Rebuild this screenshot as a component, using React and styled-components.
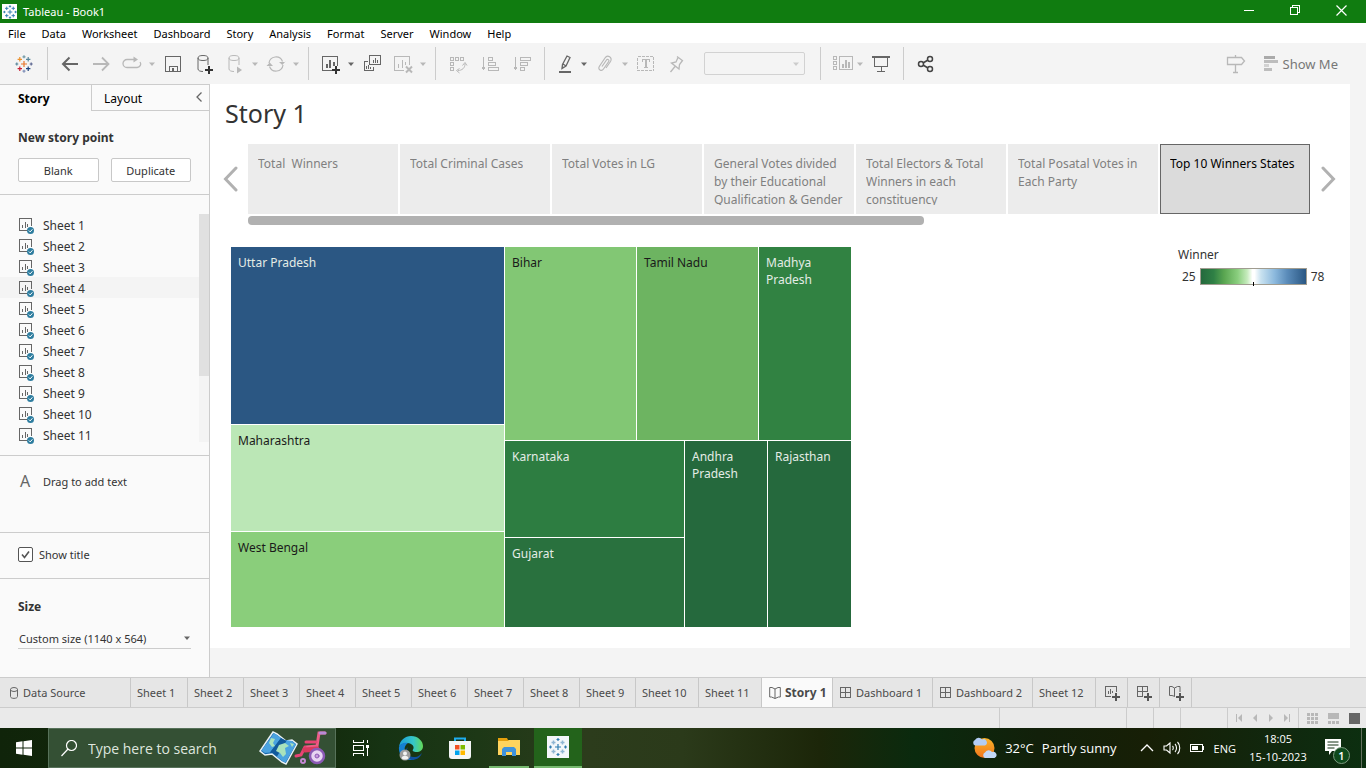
import React from 'react';
import styled, { createGlobalStyle } from 'styled-components';

const Global = createGlobalStyle`
  * { box-sizing: border-box; }
  body { margin: 0; background: #f4f4f4; font-family: "Noto Sans", "Open Sans", sans-serif; font-size: 12px; color: #333; }
  button, input, select { font: inherit; color: inherit; margin: 0; }
  button { background: none; border: 0; padding: 0; }
  ul { list-style: none; margin: 0; padding: 0; }
  h1, h2, h3, p { margin: 0; }
  svg { display: block; flex: none; }
`;

const Page = styled.div`
  min-height: 100vh;
  display: flex;
  flex-direction: column;
`;

/* ---------- drawings ---------- */

const Icon = ({ w = 20, h = 20, c = '#666', sw = 1, crisp, children }) => (
  <svg width={w} height={h} viewBox={`0 0 ${w} ${h}`} fill="none" stroke={c} strokeWidth={sw}
    shapeRendering={crisp ? 'crispEdges' : 'auto'} aria-hidden="true">{children}</svg>
);

const cross = (x, y, r) => `M${x - r} ${y}H${x + r}M${x} ${y - r}V${y + r}`;

const TableauMark = ({ size = 18, colors = [] }) => {
  const b = '#2f7cb0';
  const c = (i) => colors[i] || b;
  return (
    <svg width={size} height={size} viewBox="0 0 18 18" fill="none" strokeWidth="1.2" aria-hidden="true">
      <path d={cross(9, 9, 3)} stroke={c(0)} />
      <path d={cross(4.8, 4.3, 2.2)} stroke={c(1)} />
      <path d={cross(13.2, 4.3, 2.2)} stroke={c(2)} />
      <path d={cross(4.8, 13.7, 2.2)} stroke={c(3)} />
      <path d={cross(13.2, 13.7, 2.2)} stroke={c(4)} />
      <path d={cross(9, 1.8, 1.5)} stroke={c(5)} />
      <path d={cross(9, 16.2, 1.5)} stroke={c(6)} />
      <path d={cross(1.8, 9, 1.5)} stroke={c(7)} />
      <path d={cross(16.2, 9, 1.5)} stroke={c(8)} />
    </svg>
  );
};

const dark = '#666';
const light = '#b8b8b8';

const BackIcon = () => <Icon c={dark} sw={2}><path d="M18 10H3M9.5 3.5 3 10l6.5 6.5" /></Icon>;
const ForwardIcon = () => <Icon c={light} sw={1.8}><path d="M2 10h15M11 3.5 17.500 10 11 16.500" /></Icon>;
const ReplayIcon = () => <Icon c={light} sw={1.3}><path d="M14 5.500H5a4 4 0 0 0 0 8h10a3.500 3.500 0 0 0 3-5.500" /><path d="M11.500 2.500 16 5.500l-4.500 3z" fill={light} stroke="none" /></Icon>;
const SaveIcon = () => <Icon c={dark} crisp><path d="M2.500 2.500h15v15h-15zM6.500 17.500v-5h8v5" /><path d="M9 14h2v3H9z" fill={dark} stroke="none" /></Icon>;
const DataPlusIcon = () => (
  <Icon c={dark}><ellipse cx="9" cy="4" rx="5" ry="2.500" /><path d="M4 4v11c0 1.500 2 2.500 5 2.500M14 4v7" /><path d="M11 16h8M15 12v8" stroke="#333" strokeWidth="2" /></Icon>
);
const DataPlayIcon = () => (
  <Icon c={light}><ellipse cx="9" cy="4" rx="5" ry="2.500" /><path d="M4 4v11c0 1.500 2 2.500 5 2.500M14 4v7" /><path d="M12 12.500 17 16l-5 3.500z" fill={light} stroke="none" /></Icon>
);
const RefreshIcon = () => (
  <Icon c={light} sw={1.2}>
    <path d="M3 9a7 7 0 0 1 13.500-1.500M17 11a7 7 0 0 1-13.500 1.500" />
    <path d="M13 8h6.500v-.5L16.300 11zM.500 12 3.700 8.500 7 12z" fill={light} stroke="none" />
  </Icon>
);
const NewSheetIcon = () => (
  <Icon c={dark} crisp><path d="M11 16.500H1.500v-14h15V12" /><path d="M6 10v4M9 6v8M13 8v4" strokeWidth="2" /><path d="M11 16h8M15 12v8" stroke="#333" strokeWidth="2" /></Icon>
);
const DuplicateIcon = () => (
  <Icon c={dark} crisp><path d="M7.500 1.500h11v9h-11zM11.500 6v3M13.500 4v5M15.500 6v3M6 7.500H2.500v9h9V13M4.500 12v3M6.500 11v4M8.500 13v2" /></Icon>
);
const ClearIcon = () => (
  <Icon c={light}><path shapeRendering="crispEdges" d="M11 16.500H1.500v-14h15V11" /><path shapeRendering="crispEdges" d="M5.500 10v4M9.500 6v8M12.500 8v3" /><path d="M13 12.500 19 18.500M19 12.500 13 18.500" strokeWidth="2" /></Icon>
);
const SwapIcon = () => (
  <Icon c={light}><path shapeRendering="crispEdges" d="M2.500 3.500h3v3h-3zM7.500 3.500h3v3h-3zM12.500 3.500h3v3h-3zM2.500 8.500h3v3h-3zM2.500 13.500h3v3h-3z" /><path d="M17 10c0 4-3 6.500-7 6.500M14.500 11.500l2.500-3 2 3M11.500 14.500l-3 2 3 2.500" /></Icon>
);
const SortIcon = ({ down }) => (
  <Icon c={light} crisp>
    <path d="M3.500 3v12" /><path d="M1 12.500h5l-2.500 4z" fill={light} stroke="none" />
    {down
      ? <path d="M8.500 3.500h10v3h-10zM8.500 8.500h7v3h-7zM8.500 13.500h4v3h-4z" />
      : <path d="M8.500 3.500h4v3h-4zM8.500 8.500h7v3h-7zM8.500 13.500h10v3h-10z" />}
  </Icon>
);
const PenIcon = () => <Icon c={dark} sw={1.3}><path d="M10 2 13 3.500 9 12 5 14.500 5.500 10.500zM6 10l3 2M4.500 15l2-2" /><path d="M2 18h12" strokeWidth="2" shapeRendering="crispEdges" /></Icon>;
const ClipIcon = () => <Icon c={light} sw={1.2}><path d="M7 12.500l4.500-6.500c1-1.500 3.200 0 2.200 1.500L8.500 15c-2 2.800-6 .500-4.200-2.500L10 4c2.500-3.800 8-.500 5.500 3.500L11 14" /></Icon>;
const TextIcon = () => <Icon c={light} crisp><rect x="1.500" y="2.500" width="16" height="14" strokeDasharray="3 1" /><path d="M6.500 8V5.500h7V8M8 13.500h4" /><path d="M10 5v9" strokeWidth="2" /></Icon>;
const PinIcon = () => <Icon c={light} sw={1.3}><path d="M10 2.500 16 7M11 3.500 9 8 4.500 9l7.500 6 .500-4.500 3-4M8 12.500 3.500 18" /></Icon>;
const CardsIcon = () => <Icon c={light} crisp><path d="M.500 2.500h3v3h-3zM.500 7.500h3v3h-3zM.500 12.500h3v3h-3zM6.500 2.500h13v13h-13z" /><path d="M10 10v4M13 6v8M16 8v6" strokeWidth="2" /></Icon>;
const PresentIcon = () => <Icon c={dark} crisp><path d="M1 3h18" strokeWidth="2" /><path d="M3.500 4v8.500h13V4M10.500 12.500v5M6 17.500h8" /></Icon>;
const ShareIcon = () => <Icon c="#444" sw={1.5}><circle cx="5" cy="10" r="2.500" /><circle cx="14" cy="5" r="2.500" /><circle cx="14" cy="15" r="2.500" /><path d="M7 9l5-3M7 11l5 3" /></Icon>;
const SignIcon = () => <Icon c={light} sw={1.3}><path d="M1.500 3.500h14l3 3.500-3 3.500h-14zM9.500 1v2.500M9.500 10.500v8M7 18.500h5" /></Icon>;
const ShowMeIcon = () => <Icon w={14} h={16} c="none"><path d="M0 0h11v3H0z" fill="#aaa" /><path d="M0 4h14v3H0zM0 12h8v3H0z" fill="#bdbdbd" /><path d="M0 8h5v3H0z" fill="#d2d2d2" /></Icon>;
const CaretIcon = ({ c = dark }) => <Icon w={8} h={8} c="none"><path d="M1 2.500h6L4 6z" fill={c} /></Icon>;

const SheetIcon = () => (
  <Icon w={18} h={18}>
    <g shapeRendering="crispEdges"><path d="M9 13.500H1.500v-12h12V9" /><path d="M4.500 8v3M7.500 5v6M9.500 7v3" /></g>
    <circle cx="12.500" cy="13.500" r="3.500" fill="#2e7d9f" stroke="none" /><path d="M10.800 13.500l1.400 1.400 2.200-2.600" stroke="#fff" />
  </Icon>
);
const DatabaseIcon = () => <Icon w={10} h={12}><ellipse cx="5" cy="2.500" rx="3.500" ry="2" /><path d="M1.500 2.500v7c0 2.500 7 2.500 7 0v-7" /></Icon>;
const GridIcon = () => <Icon w={12} h={12} crisp><path d="M.500.500h10v10H.500zM5.500.500v10M.500 5.500h10" /></Icon>;
const BookIcon = () => <Icon w={12} h={13}><path d="M6 3v9.500L2.500 11H.700V1.500H3L6 3l3-1.500h2.300V11H9.500L6 12.500" /></Icon>;
const plus = <path d="M8 12h8M12 8v8" stroke="#555" strokeWidth="2" shapeRendering="crispEdges" />;
const AddSheetIcon = () => <Icon w={16} h={16} crisp><path d="M7 11.500H1.500V1.500h11V7M4.500 6v3M6.500 4v5M8.500 6v2" />{plus}</Icon>;
const AddGridIcon = () => <Icon w={16} h={16} crisp><path d="M7 11.500H1.500V1.500h10V7M6.500 1.500v10M1.500 6.500h10" />{plus}</Icon>;
const AddBookIcon = () => <Icon w={16} h={16}><path d="M7 11.500 4 10.500H1.500V1.500H4l2.500 1.500L9.500 1.500h2.500V7M6.500 3v8" />{plus}</Icon>;

/* ---------- title and menu ---------- */

const TitleBar = styled.header`
  height: 23px;
  display: flex;
  align-items: center;
  gap: 6px;
  padding: 0 2px;
  background: #107c10;
  color: #fff;
  font-size: 11px;
`;
const AppBadge = styled.span`
  width: 15px;
  height: 15px;
  display: grid;
  place-items: center;
  background: #fff;
`;
const WindowButtons = styled.div`
  margin-left: auto;
  height: 23px;
  display: flex;
`;
const WindowButton = styled.button`
  width: 46px;
  display: grid;
  place-items: center;
  padding-bottom: 2px;
`;
const MenuBar = styled.nav`
  height: 20px;
  display: flex;
  align-items: center;
  gap: 16px;
  padding-left: 8px;
  background: #fff;
  color: #000;
  font-size: 11px;
`;

/* ---------- toolbar ---------- */

const Toolbar = styled.div`
  height: 41px;
  display: flex;
  align-items: center;
  background: #f4f4f4;
`;
const ToolGroup = styled.div`
  height: 33px;
  display: flex;
  align-items: center;
  gap: ${(p) => (p.$loose ? 12 : 11)}px;
  padding: 0 12px;
  border-right: ${(p) => (p.$open ? 0 : '1px solid #ccc')};
`;
const Tool = styled.button`
  height: 24px;
  min-width: ${(p) => (p.$wide ? 23 : 20)}px;
  display: flex;
  align-items: center;
  justify-content: center;
  gap: ${(p) => (p.$tight ? 3 : 6)}px;
  margin-right: ${(p) => (p.$split ? -4 : 0)}px;
`;
const FitSelect = styled.span`
  position: relative;
  width: 101px;
  margin: 0 3px 0 6px;
  select {
    display: block;
    width: 100%;
    height: 23px;
    appearance: none;
    border: 1px solid #d2d2d2;
    border-radius: 2px;
    background: #f4f4f4;
  }
  svg { position: absolute; right: 5px; top: 8px; pointer-events: none; }
`;
const ToolbarEnd = styled.div`
  margin-left: auto;
  padding-right: 28px;
  display: flex;
  align-items: center;
  gap: 18px;
`;
const ShowMe = styled.button`
  display: flex;
  align-items: center;
  gap: 5px;
  font-size: 13px;
  color: #777;
`;

const ToolButton = ({ label, icon, split, tight, wide, caret = light }) => (
  <Tool aria-label={label} $split={split} $tight={tight} $wide={wide}>
    {icon}
    {split && <CaretIcon c={caret} />}
  </Tool>
);

/* ---------- workspace ---------- */

const Workspace = styled.div`
  flex: 1;
  display: flex;
`;
const Sidebar = styled.aside`
  width: 210px;
  flex: none;
  display: flex;
  flex-direction: column;
  background: #fafafa;
  border: solid #ccc;
  border-width: 1px 1px 0 0;
  font-size: 11px;
`;
const SideTabs = styled.div`
  height: 26px;
  display: flex;
  font-size: 12px;
`;
const SideTab = styled.button`
  display: flex;
  align-items: center;
  justify-content: space-between;
  width: ${(p) => (p.$active ? '91px' : 'auto')};
  flex: ${(p) => (p.$active ? 'none' : 1)};
  padding: ${(p) => (p.$active ? '0 0 0 18px' : '2px 6px 0 12px')};
  font-weight: ${(p) => (p.$active ? 700 : 400)};
  color: #000;
  border: solid #ccc;
  border-width: ${(p) => (p.$active ? 0 : '0 0 1px 1px')};
  svg { margin-bottom: 4px; }
`;
const SideSection = styled.section`
  padding: ${(p) => p.$pad};
  height: ${(p) => (p.$h ? `${p.$h}px` : 'auto')};
  border-bottom: ${(p) => (p.$last ? 0 : '1px solid #ccc')};
`;
const SideHeading = styled.h2`
  font-size: 12px;
  line-height: 20px;
  font-weight: 700;
`;
const ButtonRow = styled.div`
  display: grid;
  grid-template-columns: 1fr 1fr;
  gap: 12px;
  margin-top: 10px;
`;
const PointButton = styled.button`
  height: 24px;
  background: #fff;
  border: 1px solid #c8c8c8;
  border-radius: 2px;
`;
const SheetScroller = styled.div`
  height: 231px;
  display: flex;
  font-size: 12px;
`;
const SheetList = styled.ul`flex: 1;`;
const SheetRow = styled.li`
  height: 21px;
  display: flex;
  align-items: center;
  gap: 7px;
  padding: 2px 0 0 18px;
  background: ${(p) => (p.$hover ? '#f4f4f4' : 'none')};
`;
const ScrollTrack = styled.div`
  width: 10px;
  height: 228px;
  background: #f4f4f4;
`;
const ScrollThumb = styled.div`
  height: 162px;
  background: #e0e0e0;
`;
const DragRow = styled.div`
  display: flex;
  align-items: center;
  gap: 11px;
`;
const LetterA = styled.span`
  width: 14px;
  text-align: center;
  font-size: 16px;
  line-height: 20px;
  color: #666;
`;
const CheckLabel = styled.label`
  display: flex;
  align-items: center;
  gap: 6px;
`;
const CheckBox = styled.span`
  position: relative;
  display: block;
  input {
    display: block;
    appearance: none;
    width: 15px;
    height: 15px;
    border: 1px solid #555;
    border-radius: 2px;
    background: #fff;
  }
  svg { position: absolute; inset: 0; pointer-events: none; }
`;
const SizeSelect = styled.div`
  position: relative;
  margin-top: 11px;
  border-bottom: 1px solid #ccc;
  select {
    display: block;
    width: 100%;
    height: 20px;
    appearance: none;
    border: 0;
    padding: 0 1px;
    background: transparent;
  }
  svg { position: absolute; right: 0; top: 6px; pointer-events: none; }
`;

/* ---------- story ---------- */

const Canvas = styled.main`
  flex: 1;
  min-width: 0;
  padding: 0 16px 29px 0;
  background: #f4f4f4;
  display: flex;
`;
const Story = styled.article`
  flex: 1;
  min-width: 0;
  background: #fff;
`;
const StoryTitle = styled.h1`
  padding: 11px 15px 0;
  font-size: 25px;
  line-height: 36px;
  font-weight: 400;
`;
const Navigator = styled.div`
  display: grid;
  grid-template-columns: 38px minmax(0, 1fr) 40px;
  padding-top: 13px;
`;
const Arrow = styled.button`
  height: 70px;
  display: grid;
  place-items: center;
  padding: ${(p) => (p.$prev ? '0 0 0 4px' : '0 4px 0 0')};
`;
const Points = styled.div`
  display: grid;
  grid-template-columns: repeat(7, minmax(0, 1fr));
  gap: 2px;
`;
const Point = styled.button`
  height: 70px;
  display: flex;
  padding: 10px 9px 0;
  border: 1px solid ${(p) => (p.$active ? '#666' : '#ececec')};
  background: ${(p) => (p.$active ? '#dbdbdb' : '#ececec')};
  color: ${(p) => (p.$active ? '#000' : '#808080')};
  text-align: left;
  line-height: 18px;
  span { display: block; height: 50px; overflow: hidden; white-space: pre-wrap; }
`;
const PointScroll = styled.div`
  height: 9px;
  margin-top: 2px;
  width: calc(100% * 7 / 11);
  background: #b1b1b1;
  border-radius: 4px;
`;
const Viz = styled.div`
  display: grid;
  grid-template-columns: minmax(0, 620fr) minmax(0, 327fr) 172px;
  padding: 22px 0 0 21px;
`;
const tracks = (list) => list.map((n) => `minmax(0, ${n}fr)`).join(' ');
const Split = styled.div`
  height: ${(p) => (p.$root ? '380px' : 'auto')};
  display: grid;
  gap: 1px;
  line-height: 17px;
  grid-template-columns: ${(p) => (p.$cols ? tracks(p.$cols) : 'minmax(0, 1fr)')};
  grid-template-rows: ${(p) => (p.$rows ? tracks(p.$rows) : 'minmax(0, 1fr)')};
`;
const Tile = styled.div`
  padding: 7px;
  background: ${(p) => p.$bg};
  color: ${(p) => (p.$ink ? '#1a1a1a' : '#e4ece6')};
`;
const Legend = styled.div`
  grid-column: 3;
  line-height: 16px;
`;
const LegendScale = styled.div`
  display: flex;
  align-items: center;
  gap: 4px;
  padding: 5px 0 0 4px;
`;
const Ramp = styled.div`
  width: 107px;
  height: 17px;
  display: flex;
  justify-content: center;
  align-items: flex-end;
  border: 1px solid #a09c90;
  background: linear-gradient(90deg, #24693d 0%, #2f8045 12%, #5aa651 22%, #8ace7e 35%, #c6ebbd 44%, #fff 49%, #fff 51%, #c9e2f0 57%, #8cb9dd 70%, #5b8cba 82%, #2a5783 100%);
  &::after { content: ""; width: 1px; height: 4px; margin-bottom: -2px; background: #000; }
`;

/* ---------- sheet tabs and status ---------- */

const TabStrip = styled.nav`
  height: 31px;
  display: flex;
  background: #e6e6e6;
  border: solid #ccc;
  border-width: 1px 0;
`;
const SheetTab = styled.button`
  width: ${(p) => p.$w}px;
  display: flex;
  align-items: center;
  gap: 4px;
  padding-left: ${(p) => p.$pad || 6}px;
  border-right: 1px solid #c8c8c8;
  background: ${(p) => (p.$active ? '#fafafa' : 'none')};
  font-size: ${(p) => (p.$active ? 12 : 11)}px;
  font-weight: ${(p) => (p.$active ? 700 : 400)};
  color: #4a4a4a;
  white-space: nowrap;
`;
const StatusBar = styled.div`
  height: 20px;
  display: flex;
  justify-content: flex-end;
  background: #eaeaea;
`;
const StatusCell = styled.div`
  width: ${(p) => p.$w}px;
  display: flex;
  align-items: center;
  justify-content: space-between;
  padding: ${(p) => p.$pad || 0};
  border-left: 1px solid #ccc;
`;

/* ---------- taskbar ---------- */

const TaskBar = styled.footer`
  height: 40px;
  display: flex;
  background: linear-gradient(90deg, #10240a 0, #142c0e 24%, #163313 28%, #1d3816 35%, #2c3c1c 43%, #2b3a1a 50%, #1c2609 60%, #0a2a0e 67%, #12200a 76%, #171f06 84%, #10280e 94%, #0c2f10 100%);
  font-family: "Open Sans", "Noto Sans", sans-serif;
  font-size: 11px;
  color: #fff;
`;
const TaskButton = styled.button`
  width: ${(p) => p.$w || 50}px;
  display: grid;
  place-items: center;
  background: ${(p) => (p.$active ? '#23631b' : 'none')};
  border-bottom: ${(p) => (p.$open ? '2px solid #76b96f' : 0)};
  margin: ${(p) => p.$m || 0};
`;
const Search = styled.label`
  width: 288px;
  display: flex;
  align-items: center;
  gap: 11px;
  padding: 0 6px 0 12px;
  background: #345034;
  border: 1px solid #57725a;
  input {
    flex: 1;
    min-width: 0;
    border: 0;
    padding: 0;
    background: none;
    font-size: 14px;
    outline: 0;
  }
  input::placeholder { color: #dfe6df; opacity: 1; }
`;
const Tray = styled.div`
  margin-left: auto;
  display: flex;
  align-items: center;
`;
const Weather = styled.div`
  display: flex;
  align-items: center;
  gap: 8px;
  font-size: 13px;
  margin-right: 23px;
`;
const TrayIcons = styled.div`
  display: flex;
  align-items: center;
  gap: 9px;
`;
const Clock = styled.div`
  width: 84px;
  text-align: center;
  line-height: 18px;
`;
const Notify = styled.button`
  position: relative;
  width: 41px;
  height: 40px;
  display: flex;
  align-items: center;
  padding: 0 0 2px 5px;
`;
const NotifyCount = styled.span`
  position: absolute;
  right: 11px;
  bottom: 4px;
  width: 17px;
  height: 17px;
  border: 1px solid #7d9b80;
  border-radius: 50%;
  background: #0f4a1c;
  font-weight: 600;
  line-height: 15px;
`;
const ShowDesktop = styled.div`
  width: 5px;
  height: 40px;
  border-left: 1px solid #63705f;
`;

const menus = ['File', 'Data', 'Worksheet', 'Dashboard', 'Story', 'Analysis', 'Format', 'Server', 'Window', 'Help'];
const sheets = Array.from({ length: 11 }, (_, i) => `Sheet ${i + 1}`);
const points = [
  'Total  Winners', 'Total Criminal Cases', 'Total Votes in LG',
  'General Votes divided by their Educational Qualification & Gender',
  'Total Electors & Total Winners in each constituency',
  'Total Posatal Votes in Each Party', 'Top 10 Winners States',
];

const MapArt = () => (
  <svg width="70" height="36" viewBox="0 0 70 36" aria-hidden="true">
    <path d="M14 2 1 21l5 4 7-1 10 8 4 2 11-20-5-4-6 1-9-7z" fill="#1768ad" stroke="#e8f1f4" strokeWidth="1.500" />
    <path d="M15 3 2.500 20.500 6 23l5-.5L22 8zM27 10l-10 16 7 5.500 2.500 1L37 14.500 33 11z" fill="#4ba3e0" />
    <path d="M22 8 11 22.500l3 .5 4 3.500L28 10l-1 .5z" fill="#125a9c" />
    <path d="M12 8l4 1-2 4 2 3-3 1-3-4zM20 15l6-2 4 3-4 2 1 6-3 3-3-4-4-2zM31 13l4 1-2 3z" fill="#a9e2bc" />
    <g fill="none" strokeLinecap="round">
      <path d="M66 3h-6l-2 13-11 1" stroke="#ee5d87" strokeWidth="3" />
      <path d="M66 3h-5" stroke="#b78ad8" strokeWidth="3" />
      <path d="M47 12h10M46 17l-4 8-5 1" stroke="#e94475" strokeWidth="3" />
      <path d="M46 20l12-1" stroke="#d93a5e" strokeWidth="5" />
      <circle cx="58" cy="26" r="7" stroke="#8b59b5" strokeWidth="2.500" fill="#e7d5f2" />
      <circle cx="58" cy="26" r="2" stroke="#8b59b5" fill="#c99ade" />
      <circle cx="44" cy="31" r="2" stroke="#c587d5" strokeWidth="2" />
    </g>
  </svg>
);

const EdgeArt = () => (
  <svg width="26" height="26" viewBox="0 0 26 26" aria-hidden="true">
    <defs>
      <linearGradient id="edgeTop" x1="0" x2="1"><stop offset="0" stopColor="#1b9ed9" /><stop offset=".6" stopColor="#35c6c8" /><stop offset="1" stopColor="#63d957" /></linearGradient>
    </defs>
    <path d="M1 12C2 5 7 1 13 1c7 0 12 5 12 10 0 4-3 6-6.500 6-3 0-4.500-1-3.500-2.500C17 12 14 8 9.500 8 5 8 2 10 1 12z" fill="url(#edgeTop)" />
    <path d="M1 12c1-3 5-5 9-4-3 2-4 5-3 9 1 4 5 7 9 7.500C8 27 0 21 1 12z" fill="#1580d3" />
    <path d="M10 12c-3 5 1 11 7 10 3 0 5-2 7-4-2 5-6 7-10 7-7-1-9-9-4-13z" fill="#0f4f9f" />
    <circle cx="7" cy="20" r="5.500" fill="#9d9d9d" /><circle cx="7" cy="18.500" r="2" fill="#f2f2f2" /><path d="M3.500 23c1-3 6-3 7 0-1.500 2-5.500 2-7 0z" fill="#f2f2f2" />
  </svg>
);

const StoreArt = () => (
  <svg width="26" height="26" viewBox="0 0 26 26" aria-hidden="true">
    <path d="M8 8V3.500h10V8" fill="none" stroke="#1eaef0" strokeWidth="2" />
    <path d="M2 6h22v15a3 3 0 0 1-3 3H5a3 3 0 0 1-3-3z" fill="#f4f6f7" />
    <path d="M8 10h4.500v4.500H8z" fill="#f25022" /><path d="M13.500 10H18v4.500h-4.500z" fill="#7fba00" />
    <path d="M8 15.500h4.500V20H8z" fill="#00a4ef" /><path d="M13.500 15.500H18V20h-4.500z" fill="#ffb900" />
  </svg>
);

const FolderArt = () => (
  <svg width="22" height="20" viewBox="0 0 22 20" aria-hidden="true">
    <path d="M0 1h9l1 2h11v4H0z" fill="#e5a00d" /><path d="M0 4h10l1-1h11v15H0z" fill="#ffd45e" />
    <path d="M4 19v-7l2-2h10l2 2v7h-4v-4H8v4z" fill="#3f93dc" />
  </svg>
);

const WeatherArt = () => (
  <svg width="25" height="24" viewBox="0 0 25 24" aria-hidden="true">
    <defs><linearGradient id="sun" x2="0" y2="1"><stop stopColor="#fbb429" /><stop offset="1" stopColor="#f0741c" /></linearGradient></defs>
    <circle cx="12.500" cy="12" r="10" fill="url(#sun)" />
    <path d="M3 9.500a3 3 0 0 1 0-5.500 4 4 0 0 1 7-.5 3 3 0 0 1 3 6z" fill="#b3cdf5" />
    <path d="M13 22a3 3 0 0 1 0-5.500 4 4 0 0 1 7-.5 3.200 3.200 0 0 1 2.500 6z" fill="#c3d8f8" />
  </svg>
);

export default function App() {
  return (
    <Page>
      <Global />
      <TitleBar>
        <AppBadge><TableauMark size={14} /></AppBadge>
        Tableau - Book1
        <WindowButtons>
          <WindowButton aria-label="Minimize"><Icon w={11} h={11} c="#fff" crisp><path d="M0 5.500h10" /></Icon></WindowButton>
          <WindowButton aria-label="Restore"><Icon w={11} h={11} c="#fff" crisp><path d="M.500 2.500h7v7h-7zM2.500 2V.500h7v7H8" /></Icon></WindowButton>
          <WindowButton aria-label="Close"><Icon w={11} h={11} c="#fff" sw={1.2}><path d="M.500.500l10 10M10.500.500l-10 10" /></Icon></WindowButton>
        </WindowButtons>
      </TitleBar>
      <MenuBar>{menus.map((m) => <button key={m}>{m}</button>)}</MenuBar>

      <Toolbar>
        <ToolGroup>
          <ToolButton label="Start page" wide icon={<TableauMark size={18} colors={['#e8762b', '#eb912c', '#59879b', '#c72035', '#1f447e', '#7099a6', '#7f8fb8', '#59879b', '#5b6591']} />} />
        </ToolGroup>
        <ToolGroup>
          <ToolButton label="Back" icon={<BackIcon />} />
          <ToolButton label="Forward" icon={<ForwardIcon />} />
          <ToolButton label="Replay" icon={<ReplayIcon />} split />
          <ToolButton label="Save" icon={<SaveIcon />} />
          <ToolButton label="New data source" icon={<DataPlusIcon />} />
          <ToolButton label="Pause updates" icon={<DataPlayIcon />} split />
          <ToolButton label="Run update" icon={<RefreshIcon />} split />
        </ToolGroup>
        <ToolGroup>
          <ToolButton label="New worksheet" icon={<NewSheetIcon />} split caret={dark} />
          <ToolButton label="Duplicate" icon={<DuplicateIcon />} />
          <ToolButton label="Clear" icon={<ClearIcon />} split />
        </ToolGroup>
        <ToolGroup $loose>
          <ToolButton label="Swap" icon={<SwapIcon />} />
          <ToolButton label="Sort ascending" icon={<SortIcon />} />
          <ToolButton label="Sort descending" icon={<SortIcon down />} />
        </ToolGroup>
        <ToolGroup>
          <ToolButton label="Highlight" icon={<PenIcon />} split tight caret={dark} />
          <ToolButton label="Group" icon={<ClipIcon />} split />
          <ToolButton label="Labels" icon={<TextIcon />} />
          <ToolButton label="Fix axes" icon={<PinIcon />} />
          <FitSelect><select aria-label="Fit" defaultValue=""><option value="" /></select><CaretIcon c="#ccc" /></FitSelect>
        </ToolGroup>
        <ToolGroup>
          <ToolButton label="Show cards" icon={<CardsIcon />} split tight />
          <ToolButton label="Presentation mode" icon={<PresentIcon />} />
        </ToolGroup>
        <ToolGroup $open><ToolButton label="Share" icon={<ShareIcon />} /></ToolGroup>
        <ToolbarEnd>
          <ToolButton label="Guide" icon={<SignIcon />} />
          <ShowMe><ShowMeIcon />Show Me</ShowMe>
        </ToolbarEnd>
      </Toolbar>

      <Workspace>
        <Sidebar>
          <SideTabs>
            <SideTab $active>Story</SideTab>
            <SideTab>Layout<Icon w={8} h={10} sw={1.3}><path d="M6.500.500 2 5l4.500 4.500" /></Icon></SideTab>
          </SideTabs>
          <SideSection $pad="17px 18px 12px">
            <SideHeading>New story point</SideHeading>
            <ButtonRow><PointButton>Blank</PointButton><PointButton>Duplicate</PointButton></ButtonRow>
          </SideSection>
          <SideSection $pad="19px 0 10px">
            <SheetScroller>
              <SheetList>
                {sheets.map((s, i) => <SheetRow key={s} $hover={i === 3}><SheetIcon />{s}</SheetRow>)}
              </SheetList>
              <ScrollTrack><ScrollThumb /></ScrollTrack>
            </SheetScroller>
          </SideSection>
          <SideSection $pad="15px 18px" $h={77}>
            <DragRow><LetterA>A</LetterA>Drag to add text</DragRow>
          </SideSection>
          <SideSection $pad="14px 18px" $h={46}>
            <CheckLabel>
              <CheckBox>
                <input type="checkbox" defaultChecked />
                <Icon w={15} h={15} c="#555" sw={1.6}><path d="M4 7.500 6.500 10.500 11 4.500" /></Icon>
              </CheckBox>
              Show title
            </CheckLabel>
          </SideSection>
          <SideSection $pad="18px 18px 0" $last>
            <SideHeading>Size</SideHeading>
            <SizeSelect>
              <select aria-label="Size"><option>Custom size (1140 x 564)</option></select>
              <CaretIcon />
            </SizeSelect>
          </SideSection>
        </Sidebar>

        <Canvas>
          <Story>
            <StoryTitle>Story 1</StoryTitle>
            <Navigator>
              <Arrow $prev aria-label="Previous point"><Icon w={16} h={26} c="#b1b1b1" sw={3}><path d="M13 2 2.500 13 13 24" strokeLinecap="round" /></Icon></Arrow>
              <div>
                <Points>
                  {points.map((p, i) => <Point key={p} $active={i === 6}><span>{p}</span></Point>)}
                </Points>
                <PointScroll />
              </div>
              <Arrow aria-label="Next point"><Icon w={16} h={26} c="#b1b1b1" sw={3}><path d="M3 2l10.500 11L3 24" strokeLinecap="round" /></Icon></Arrow>
            </Navigator>
            <Viz>
              <Split $root $cols={[273, 346]}>
                <Split $rows={[177, 106, 95]}>
                  <Tile $bg="#2b5783">Uttar Pradesh</Tile>
                  <Tile $bg="#bbe7b6" $ink>Maharashtra</Tile>
                  <Tile $bg="#8ace7b" $ink>West Bengal</Tile>
                </Split>
                <Split $rows={[193, 186]}>
                  <Split $cols={[131, 121, 92]}>
                    <Tile $bg="#82c774" $ink>Bihar</Tile>
                    <Tile $bg="#6db461" $ink>Tamil Nadu</Tile>
                    <Tile $bg="#318242">Madhya Pradesh</Tile>
                  </Split>
                  <Split $cols={[179, 82, 83]}>
                    <Split $rows={[96, 89]}>
                      <Tile $bg="#2d7d41">Karnataka</Tile>
                      <Tile $bg="#29713e">Gujarat</Tile>
                    </Split>
                    <Tile $bg="#25693d">Andhra Pradesh</Tile>
                    <Tile $bg="#25693d">Rajasthan</Tile>
                  </Split>
                </Split>
              </Split>
              <Legend>
                Winner
                <LegendScale>25<Ramp />78</LegendScale>
              </Legend>
            </Viz>
          </Story>
        </Canvas>
      </Workspace>

      <TabStrip>
        <SheetTab $w={131} $pad={9}><DatabaseIcon />Data Source</SheetTab>
        {sheets.map((s, i) => <SheetTab key={s} $w={i > 8 ? 63 : i === 0 ? 57 : 56}>{s}</SheetTab>)}
        <SheetTab $w={71} $pad={7} $active><BookIcon />Story 1</SheetTab>
        <SheetTab $w={100} $pad={7}><GridIcon />Dashboard 1</SheetTab>
        <SheetTab $w={100} $pad={7}><GridIcon />Dashboard 2</SheetTab>
        <SheetTab $w={63}>Sheet 12</SheetTab>
        <SheetTab $w={32} $pad={8} aria-label="New worksheet"><AddSheetIcon /></SheetTab>
        <SheetTab $w={32} $pad={8} aria-label="New dashboard"><AddGridIcon /></SheetTab>
        <SheetTab $w={32} $pad={8} aria-label="New story"><AddBookIcon /></SheetTab>
      </TabStrip>
      <StatusBar>
        <StatusCell $w={127} />
        <StatusCell $w={27} />
        <StatusCell $w={27} />
        <StatusCell $w={47} />
        <StatusCell $w={71} $pad="0 7px">
          <Icon w={8} h={8} c="none"><path d="M1 0h1v8H1zM7 0v8L3 4z" fill={light} /></Icon>
          <Icon w={8} h={8} c="none"><path d="M6 0v8L2 4z" fill={light} /></Icon>
          <Icon w={8} h={8} c="none"><path d="M2 0v8l4-4z" fill={light} /></Icon>
          <Icon w={8} h={8} c="none"><path d="M6 0h1v8H6zM1 0v8l4-4z" fill={light} /></Icon>
        </StatusCell>
        <StatusCell $w={68} $pad="0 6px 0 8px">
          <Icon w={11} h={11} c={light} sw={3} crisp><path d="M0 1.500h11M0 5.500h11M0 9.500h11" strokeDasharray="3 1" /></Icon>
          <Icon w={11} h={11} c="none"><path d="M0 0h11v6H0zM0 8h3v3H0zM4 8h3v3H4zM8 8h3v3H8z" fill={light} /></Icon>
          <Icon w={11} h={11} c="none"><path d="M0 0h11v11H0z" fill="#666" /></Icon>
        </StatusCell>
      </StatusBar>

      <TaskBar>
        <TaskButton $w={48} aria-label="Start"><Icon w={16} h={16} c="none"><path d="M0 2.200 6.500 1.300v6.200H0zM7.500 1.200 16 0v7.500H7.500zM0 8.500h6.500v6.200L0 13.800zM7.500 8.500H16V16l-8.500-1.200z" fill="#fff" /></Icon></TaskButton>
        <Search>
          <Icon w={16} h={17} c="#fff" sw={1.2}><circle cx="10.500" cy="5.500" r="5" /><path d="M7 9 .500 16" /></Icon>
          <input placeholder="Type here to search" aria-label="Search" />
          <MapArt />
        </Search>
        <TaskButton aria-label="Task view">
          <Icon w={17} h={16} c="#fff" crisp><path d="M.500 0v2.500h10V0M.500 5.500h10v5H.500zM.500 16v-2.500h10V16M14.500 0v3M14.500 8v8" /><path d="M13 5h3v3h-3z" fill="#fff" stroke="none" /></Icon>
        </TaskButton>
        <TaskButton aria-label="Edge"><EdgeArt /></TaskButton>
        <TaskButton $w={48} aria-label="Store"><StoreArt /></TaskButton>
        <TaskButton $w={40} $open $m="0 5px" aria-label="File Explorer"><FolderArt /></TaskButton>
        <TaskButton $w={48} $open $active aria-label="Tableau">
          <svg width="22" height="22" viewBox="0 0 22 22" aria-hidden="true"><path d="M0 0h22v22H0z" fill="#f3f7fa" />
            <g transform="translate(2 2)" fill="none" stroke="#8fb6d3" strokeWidth="1.500"><path d={cross(4.5, 4.5, 2)} /><path d={cross(13.5, 4.5, 2)} /><path d={cross(4.5, 13.5, 2)} /><path d={cross(13.5, 13.5, 2)} />
              <path stroke="#2f7cb0" strokeWidth="1.200" d={cross(9, 9, 3) + cross(9, 1.5, 1.5) + cross(9, 16.5, 1.5) + cross(1.5, 9, 1.5) + cross(16.5, 9, 1.5)} /></g></svg>
        </TaskButton>
        <Tray>
          <Weather><WeatherArt /><span>32°C</span><span>Partly sunny</span></Weather>
          <TrayIcons>
            <Icon w={14} h={10} c="#fff" sw={1.3}><path d="M1 8l6-6 6 6" /></Icon>
            <Icon w={18} h={14} c="#fff" sw={1.1}><path d="M1 5v4h2.500L7 12V2L3.500 5zM9.500 5c1 1 1 3 0 4M12 3c2 2 2 6 0 8M14.500 1c3 3 3 9 0 12" /></Icon>
            <Icon w={15} h={10} c="#fff" crisp><path d="M.500 1.500h12v7H.500zM13.500 3v4" /><path d="M2 3h6v4H2z" fill="#fff" stroke="none" /></Icon>
            <span>ENG</span>
          </TrayIcons>
          <Clock>18:05<br />15-10-2023</Clock>
          <Notify aria-label="Notifications">
            <Icon w={16} h={16} c="none"><path d="M0 0h16v12H7l-3 4v-4H0z" fill="#fff" /><path d="M2.500 3h11M2.500 6h11M2.500 9h7" stroke="#123012" /></Icon>
            <NotifyCount>1</NotifyCount>
          </Notify>
          <ShowDesktop />
        </Tray>
      </TaskBar>
    </Page>
  );
}
